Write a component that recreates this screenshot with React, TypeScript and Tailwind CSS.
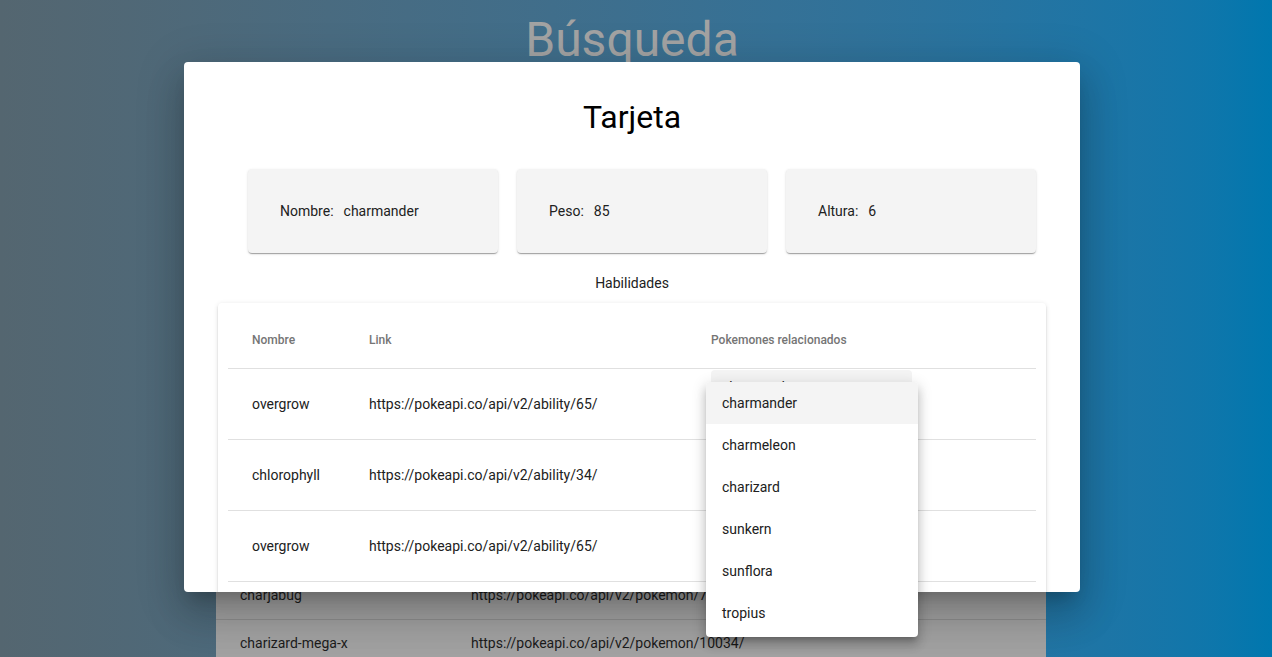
import React from 'react'

const bgRows = [
    ['charjabug', 'https://pokeapi.co/api/v2/pokemon/737/'],
    ['charizard-mega-x', 'https://pokeapi.co/api/v2/pokemon/10034/'],
]

const habilidades = [
    ['overgrow', 'https://pokeapi.co/api/v2/ability/65/'],
    ['chlorophyll', 'https://pokeapi.co/api/v2/ability/34/'],
    ['overgrow', 'https://pokeapi.co/api/v2/ability/65/'],
]

const relacionados = ['charmander', 'charmeleon', 'charizard', 'sunkern', 'sunflora', 'tropius']

const paper1 = 'shadow-[0_2px_1px_-1px_rgba(0,0,0,0.2),0_1px_1px_0_rgba(0,0,0,0.14),0_1px_3px_0_rgba(0,0,0,0.12)]'

export default function App() {
    return (
        <div className="relative w-[1272px] h-[657px] overflow-hidden bg-linear-to-r from-[#546670] to-[#0077ae] font-['Roboto',sans-serif]">

            {/* pagina de fondo (detras del backdrop) */}
            <div className="w-[1264px] flex flex-col">
                <h1 className="self-center mt-[12px] text-[48px] leading-[56px] text-[#a3a3a3]">Búsqueda</h1>
                <div className="ml-[216px] mt-[24px] w-[830px] bg-[#a1a1a1] text-[14px] text-[#1c1c1c]">
                    <div className="h-[480px] border-b border-[#8e8e8e]" />
                    {bgRows.map(([name, url]) => (
                        <div key={name} className="h-[48px] flex items-center border-b border-[#8e8e8e]">
                            <div className="w-[255px] pl-[24px]">{name}</div>
                            <div>{url}</div>
                        </div>
                    ))}
                </div>
            </div>

            {/* dialogo */}
            <div className="absolute left-[184px] top-[62px] w-[896px] h-[530px] bg-white rounded-[4px] overflow-hidden shadow-[0_11px_15px_-7px_rgba(0,0,0,0.2),0_24px_38px_3px_rgba(0,0,0,0.14),0_9px_46px_8px_rgba(0,0,0,0.12)]">
                <h2 className="pt-[35px] text-center text-[32px] leading-[40px] text-black">Tarjeta</h2>

                <div className="mt-[32px] flex gap-[19px] pl-[64px] pr-[44px] text-[14px] text-[#212121]">
                    <div className={`flex-1 h-[84px] bg-[#f4f4f4] rounded-[4px] px-[32px] flex items-center ${paper1}`}>
                        Nombre:<span className="ml-[10px]">charmander</span>
                    </div>
                    <div className={`flex-1 h-[84px] bg-[#f4f4f4] rounded-[4px] px-[32px] flex items-center ${paper1}`}>
                        Peso:<span className="ml-[10px]">85</span>
                    </div>
                    <div className={`flex-1 h-[84px] bg-[#f4f4f4] rounded-[4px] px-[32px] flex items-center ${paper1}`}>
                        Altura:<span className="ml-[10px]">6</span>
                    </div>
                </div>

                <p className="mt-[20px] text-center text-[14px] leading-[20px] text-[#212121]">Habilidades</p>

                <div className="mt-[10px] mx-[34px] bg-white rounded-[4px] px-[10px] pt-[10px] shadow-[0_3px_1px_-2px_rgba(0,0,0,0.2),0_2px_2px_0_rgba(0,0,0,0.14),0_1px_5px_0_rgba(0,0,0,0.12)]">
                    <div className="h-[56px] pb-[2px] flex items-center border-b border-[#e0e0e0] text-[12px] font-medium text-[#757575]">
                        <div className="w-[117px] pl-[24px]">Nombre</div>
                        <div className="w-[342px] pl-[24px]">Link</div>
                        <div className="flex-1 pl-[24px]">Pokemones relacionados</div>
                    </div>
                    {habilidades.map(([name, url], i) => (
                        <div key={i} className="h-[71px] flex border-b border-[#e0e0e0] text-[14px] text-[#212121]">
                            <div className="w-[117px] pl-[24px] self-center">{name}</div>
                            <div className="w-[342px] pl-[24px] self-center">{url}</div>
                            <div className="flex-1 pl-[24px] pt-[1px]">
                                {i === 0 && (
                                    <div className="w-[201px] h-[56px] bg-[#f4f4f4] rounded-t-[4px] px-[11px] pt-[7px] leading-[20px]">charmander</div>
                                )}
                            </div>
                        </div>
                    ))}
                    <div className="h-[71px]" />
                </div>
            </div>

            {/* menu del select */}
            <div className="absolute left-[706px] top-[382px] w-[212px] h-[255px] bg-white rounded-[4px] overflow-hidden shadow-[0_5px_5px_-3px_rgba(0,0,0,0.2),0_8px_10px_1px_rgba(0,0,0,0.14),0_3px_14px_2px_rgba(0,0,0,0.12)]">
                {relacionados.map((p, i) => (
                    <div key={p} className={`h-[42px] px-[16px] flex items-center text-[14px] text-[#212121] ${i === 0 ? 'bg-[#f4f4f4]' : ''}`}>
                        {p}
                    </div>
                ))}
            </div>
        </div>
    )
}
